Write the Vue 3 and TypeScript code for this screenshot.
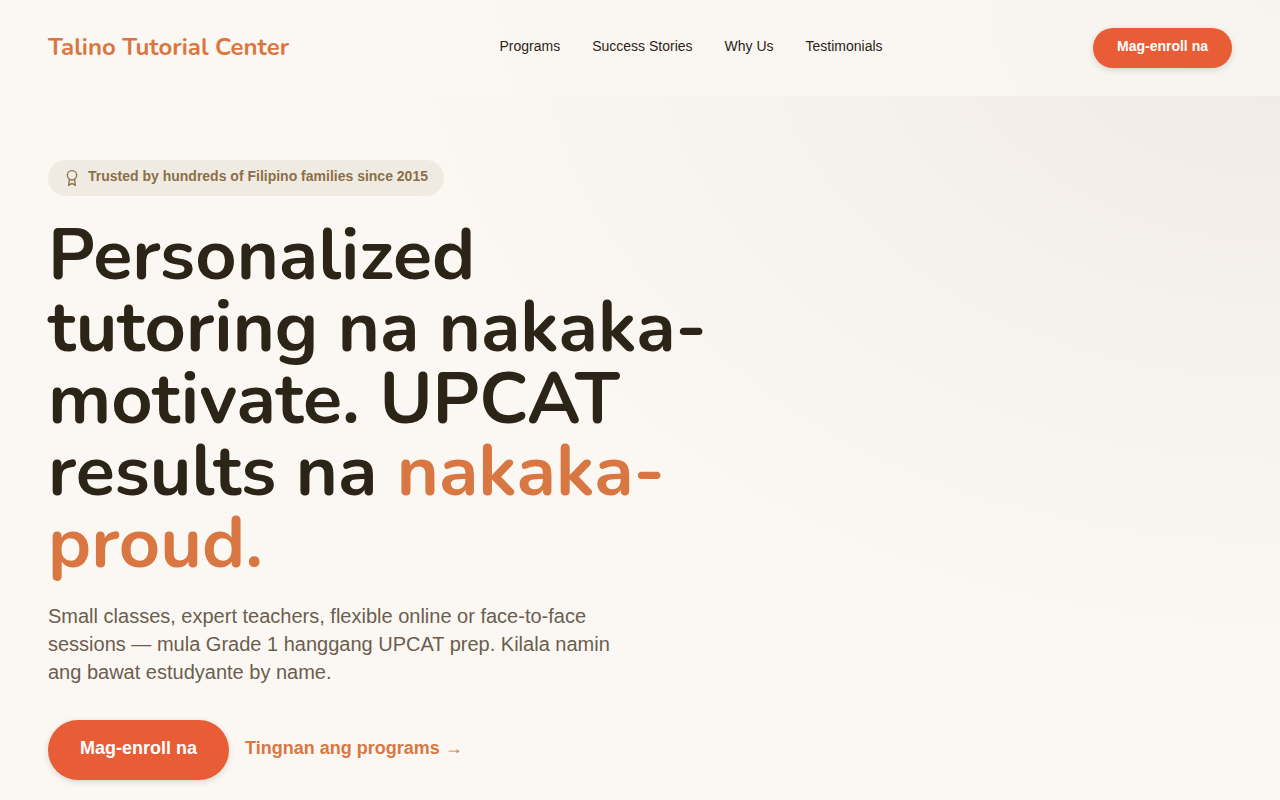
<script setup lang="ts">
interface NavLink {
  label: string
  href: string
}

const links: NavLink[] = [
  { label: 'Programs', href: '#programs' },
  { label: 'Success Stories', href: '#stories' },
  { label: 'Why Us', href: '#why-us' },
  { label: 'Testimonials', href: '#testimonials' },
]
</script>

<template>
  <div id="top" class="page">
    <header class="bar">
      <a class="brand" href="#top">Talino Tutorial Center</a>
      <nav class="nav" aria-label="Main">
        <a v-for="link in links" :key="link.href" :href="link.href">{{ link.label }}</a>
      </nav>
      <button class="btn btn-small" type="button">Mag-enroll na</button>
    </header>
    <main class="hero">
      <p class="badge">
        <svg viewBox="0 0 24 24" width="16" height="16" fill="none" stroke="currentColor" stroke-width="2" stroke-linecap="round" stroke-linejoin="round" aria-hidden="true">
          <circle cx="12" cy="8" r="7" />
          <path d="M8.210 13.890 7 23l5-3 5 3-1.210-9.120" />
        </svg>
        <span>Trusted by hundreds of Filipino families since 2015</span>
      </p>
      <h1>Personalized tutoring na nakaka-motivate. UPCAT results na <em>nakaka-proud.</em></h1>
      <p class="lead">Small classes, expert teachers, flexible online or face-to-face sessions — mula Grade 1 hanggang UPCAT prep. Kilala namin ang bawat estudyante by name.</p>
      <div class="actions">
        <button class="btn btn-large" type="button">Mag-enroll na</button>
        <a class="more" href="#programs">Tingnan ang programs →</a>
      </div>
    </main>
  </div>
</template>

<style>
body {
  background: #fbf8f3;
}
</style>

<style scoped>
.page {
  min-height: 100vh;
  background: radial-gradient(905px 660px at top right, #efeae3, #fbf8f3);
  color: #2c2416;
  font-family: "Liberation Sans", Arial, sans-serif;
}
a {
  color: inherit;
  text-decoration: none;
}
.bar {
  display: flex;
  align-items: center;
  justify-content: space-between;
  box-sizing: border-box;
  padding: 28px 48px;
  background: rgb(251 248 243 / 70%);
}
.brand {
  padding-bottom: 2px;
  color: #d97742;
  font: 700 24px/32px Nunito, "Open Sans", sans-serif;
}
.nav {
  display: flex;
  gap: 32px;
  padding-bottom: 4px;
  font-size: 14px;
  line-height: 20px;
}
.btn {
  border: 0;
  border-radius: 999px;
  background: #e85d35;
  color: #fff;
  font-family: inherit;
  font-weight: 700;
  box-shadow: 0 2px 6px rgb(44 36 22 / 16%);
}
.btn-small {
  height: 40px;
  padding: 0 24px 4px;
  font-size: 14px;
}
.btn-large {
  height: 60px;
  padding: 0 32px 4px;
  font-size: 18px;
}
.hero {
  padding: 64px 48px 20px;
}
.badge {
  display: flex;
  align-items: center;
  gap: 8px;
  width: fit-content;
  height: 36px;
  margin: 0 0 23px;
  padding: 0 16px;
  border-radius: 999px;
  background: #f0ebe2;
  color: #8b6f47;
  font-size: 14px;
  font-weight: 700;
}
.badge span {
  padding-bottom: 4px;
}
h1 {
  max-width: 672px;
  margin: 0;
  font: 700 72px/72px Nunito, "Open Sans", sans-serif;
}
h1 em {
  color: #d97742;
  font-style: normal;
}
.lead {
  max-width: 576px;
  margin: 23px 0 34px;
  color: #6b5d4f;
  font-size: 20px;
  line-height: 28px;
}
.actions {
  display: flex;
  align-items: center;
  gap: 16px;
}
.more {
  padding-bottom: 4px;
  color: #d97742;
  font-size: 18px;
  font-weight: 700;
}
</style>
